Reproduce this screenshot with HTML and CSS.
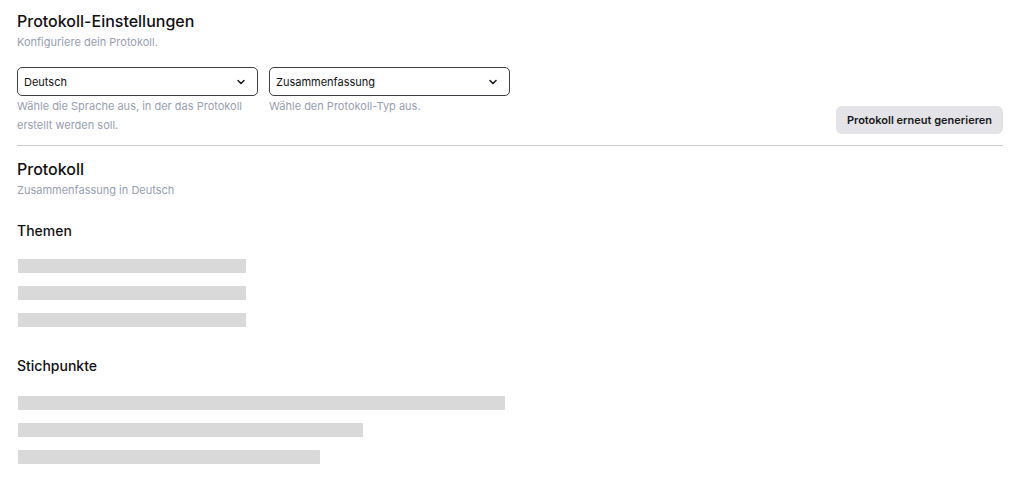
FILE: index.html
```html
<!DOCTYPE html>
<html lang="de">
<head>
<meta charset="utf-8">
<title>Protokoll-Einstellungen</title>
<link rel="stylesheet" href="styles.css">
</head>
<body>
<main class="page">
  <section class="settings">
    <h1 class="title">Protokoll-Einstellungen</h1>
    <p class="subtitle">Konfiguriere dein Protokoll.</p>
    <div class="settings-row">
      <div class="fields">
        <div class="field">
          <div class="select">
            <span>Deutsch</span>
            <svg class="chev" width="10" height="10" viewBox="0 0 10 10"><path d="M2 3.5 L5 6.5 L8 3.5" fill="none" stroke="#18181b" stroke-width="1.5" stroke-linecap="round" stroke-linejoin="round"/></svg>
          </div>
          <p class="help">Wähle die Sprache aus, in der das Protokoll erstellt werden soll.</p>
        </div>
        <div class="field">
          <div class="select">
            <span>Zusammenfassung</span>
            <svg class="chev" width="10" height="10" viewBox="0 0 10 10"><path d="M2 3.5 L5 6.5 L8 3.5" fill="none" stroke="#18181b" stroke-width="1.5" stroke-linecap="round" stroke-linejoin="round"/></svg>
          </div>
          <p class="help">Wähle den Protokoll-Typ aus.</p>
        </div>
      </div>
      <button class="btn" type="button">Protokoll erneut generieren</button>
    </div>
  </section>
  <hr class="divider">
  <section class="protocol">
    <h2 class="title">Protokoll</h2>
    <p class="subtitle">Zusammenfassung in Deutsch</p>
    <div class="block block-themes">
      <h3 class="block-title">Themen</h3>
      <div class="skeletons">
        <div class="sk" style="width:228px"></div>
        <div class="sk" style="width:228px"></div>
        <div class="sk" style="width:228px"></div>
      </div>
    </div>
    <div class="block block-points">
      <h3 class="block-title">Stichpunkte</h3>
      <div class="skeletons">
        <div class="sk" style="width:487px"></div>
        <div class="sk" style="width:345px"></div>
        <div class="sk" style="width:302px"></div>
      </div>
    </div>
  </section>
</main>
</body>
</html>
```

FILE: styles.css
```css
* { box-sizing: border-box; }
html, body { margin: 0; padding: 0; background: #ffffff; }
body {
  font-family: Inter, "Liberation Sans", Arial, sans-serif;
  color: #18181b;
}
.page {
  padding: 9px 21px 0 17px;
}
.title {
  margin: 0;
  font-size: 16px;
  line-height: 24px;
  font-weight: 500;
  color: #111113;
}
.subtitle {
  margin: 1px 0 0;
  font-size: 11px;
  line-height: 16px;
  color: #98a0b0;
}
.settings-row {
  margin-top: 17px;
  display: flex;
  justify-content: space-between;
  align-items: flex-end;
}
.fields {
  display: flex;
  gap: 11px;
}
.field {
  width: 241px;
}
.select {
  height: 29px;
  border: 1px solid #3f3f46;
  border-radius: 5px;
  padding: 0 11px 0 6px;
  display: flex;
  align-items: center;
  justify-content: space-between;
  font-size: 11px;
  font-weight: 400;
  color: #111113;
}
.chev { display: block; }
.help {
  margin: 1px 0 0;
  font-size: 11px;
  line-height: 19px;
  color: #98a0b0;
}
.btn {
  height: 28px;
  margin-bottom: 1px;
  padding: 0 11px;
  border: none;
  border-radius: 6px;
  background: #e4e4e8;
  font-family: inherit;
  font-size: 11px;
  font-weight: 600;
  color: #18181b;
}
.divider {
  margin: 10px 0 0;
  border: none;
  border-top: 1px solid #c9c9cf;
  height: 0;
}
.protocol { padding-top: 11px; }
.block-themes { margin-top: 23px; }
.block-points { margin-top: 29px; }
.block-title {
  margin: 0;
  font-size: 14px;
  line-height: 20px;
  font-weight: 500;
  color: #111113;
}
.skeletons {
  display: flex;
  flex-direction: column;
  gap: 13px;
  padding-left: 1px;
}
.block-themes .skeletons { margin-top: 18px; }
.block-points .skeletons { margin-top: 20px; }
.sk {
  height: 14px;
  background: #d9d9d9;
  border-radius: 1px;
}
```
